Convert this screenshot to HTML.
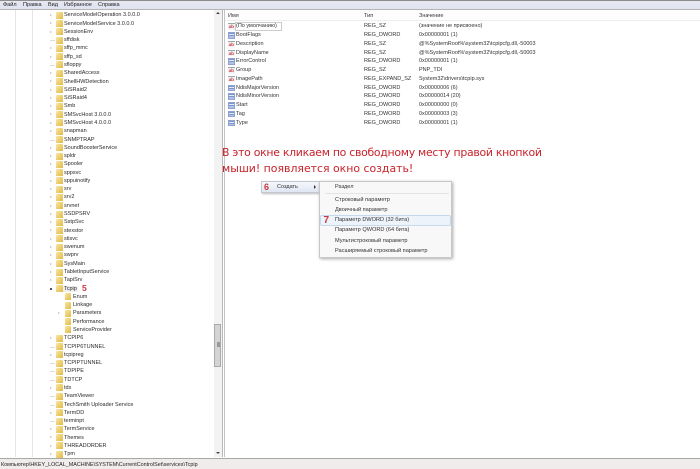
<!DOCTYPE html>
<html lang="ru"><head><meta charset="utf-8">
<style>
html,body{margin:0;padding:0;background:#fff}
#p{position:relative;width:700px;height:469px;overflow:hidden;background:#fff;font-family:"Liberation Sans","Noto Sans CJK SC",sans-serif;color:#222;font-size:5.5px;filter:blur(.3px)}
.a{position:absolute;white-space:nowrap}
.t{position:absolute;left:0;top:11.3px;width:214px}
.r{position:relative;height:8.287px;line-height:8.287px;padding-left:64px;white-space:nowrap;color:#2a2a2a}
.r i{position:absolute;left:56px;top:.5px;width:6.5px;height:7px;background:linear-gradient(135deg,#f8e7a0,#e2b84a);border-radius:1px 1px 0 0}
.r.c{padding-left:73px}.r.c i{left:64.5px}
.r b{position:absolute;left:50px;top:2.8px;width:0;height:0;border-left:2.5px solid #bbb;border-top:1.5px solid transparent;border-bottom:1.5px solid transparent}
.r u{position:absolute;left:50px;top:4px;width:5px;height:1px;background:#ddd}
.l{position:absolute;left:0;width:230px;height:8.75px;line-height:8.75px;color:#333;white-space:nowrap}
.l i{position:absolute;left:228px;top:1.2px;width:6.5px;height:6.5px;box-sizing:border-box;font:bold 4.6px/6px "Liberation Sans",sans-serif;text-align:center;font-style:normal}
.l i.s{background:#f3f3f6;color:#c8383c;border-top:1px solid #9aa}
.l i.d{background:repeating-linear-gradient(#7d95cc 0 1.1px,#e6ebf7 1.1px 2.2px);border:.5px solid #8ea3d2}
.l span{position:absolute;top:0}
.l .n{left:236px}.l .y{left:364px}.l .v{left:419px}
.m{left:335px;font-size:5.6px;color:#333}
</style></head><body>
<div id="p">
<div class="a" style="left:0;top:0;width:700px;height:1px;background:#8d8d8d"></div>
<div class="a" style="left:0;top:1px;width:700px;height:8px;background:linear-gradient(#e6e7f1,#e0e3f1)"></div>
<div class="a" style="left:0;top:9px;width:700px;height:1px;background:#b5b5b5"></div>
<div class="a" style="left:3px;top:1.5px;line-height:7px">Файл</div>
<div class="a" style="left:23px;top:1.5px;line-height:7px">Правка</div>
<div class="a" style="left:48px;top:1.5px;line-height:7px">Вид</div>
<div class="a" style="left:64px;top:1.5px;line-height:7px">Избранное</div>
<div class="a" style="left:98px;top:1.5px;line-height:7px">Справка</div>

<div class="a" style="left:15px;top:10px;width:1px;height:447px;background:#e6e6e6"></div>
<div class="a" style="left:32px;top:10px;width:1px;height:447px;background:#e6e6e6"></div>

<div class="t">
<div class="r"><b></b><i></i>ServiceModelOperation 3.0.0.0</div>
<div class="r"><b></b><i></i>ServiceModelService 3.0.0.0</div>
<div class="r"><b></b><i></i>SessionEnv</div>
<div class="r"><u></u><i></i>sffdisk</div>
<div class="r"><b></b><i></i>sffp_mmc</div>
<div class="r"><b></b><i></i>sffp_sd</div>
<div class="r"><u></u><i></i>sfloppy</div>
<div class="r"><b></b><i></i>SharedAccess</div>
<div class="r"><b></b><i></i>ShellHWDetection</div>
<div class="r"><b></b><i></i>SiSRaid2</div>
<div class="r"><b></b><i></i>SiSRaid4</div>
<div class="r"><b></b><i></i>Smb</div>
<div class="r"><b></b><i></i>SMSvcHost 3.0.0.0</div>
<div class="r"><b></b><i></i>SMSvcHost 4.0.0.0</div>
<div class="r"><b></b><i></i>snapman</div>
<div class="r"><u></u><i></i>SNMPTRAP</div>
<div class="r"><b></b><i></i>SoundBoosterService</div>
<div class="r"><b></b><i></i>spldr</div>
<div class="r"><b></b><i></i>Spooler</div>
<div class="r"><b></b><i></i>sppsvc</div>
<div class="r"><b></b><i></i>sppuinotify</div>
<div class="r"><b></b><i></i>srv</div>
<div class="r"><b></b><i></i>srv2</div>
<div class="r"><b></b><i></i>srvnet</div>
<div class="r"><b></b><i></i>SSDPSRV</div>
<div class="r"><b></b><i></i>SstpSvc</div>
<div class="r"><b></b><i></i>stexstor</div>
<div class="r"><b></b><i></i>stisvc</div>
<div class="r"><b></b><i></i>swenum</div>
<div class="r"><b></b><i></i>swprv</div>
<div class="r"><b></b><i></i>SysMain</div>
<div class="r"><b></b><i></i>TabletInputService</div>
<div class="r"><b></b><i></i>TapiSrv</div>
<div class="r"><b style="border:0;width:2px;height:2px;background:#555;top:3.5px"></b><i></i><span style="background:#efefef;padding:0 1px;margin-left:-1px">Tcpip</span><span style="position:absolute;left:82px;top:-1px;font-size:8.5px;font-weight:bold;color:#c8383c">5</span></div>
<div class="r c"><i></i>Enum</div>
<div class="r c"><i></i>Linkage</div>
<div class="r c"><b style="left:58px"></b><i></i>Parameters</div>
<div class="r c"><i></i>Performance</div>
<div class="r c"><i></i>ServiceProvider</div>
<div class="r"><b></b><i></i>TCPIP6</div>
<div class="r"><u></u><i></i>TCPIP6TUNNEL</div>
<div class="r"><b></b><i></i>tcpipreg</div>
<div class="r"><u></u><i></i>TCPIPTUNNEL</div>
<div class="r"><u></u><i></i>TDPIPE</div>
<div class="r"><u></u><i></i>TDTCP</div>
<div class="r"><b></b><i></i>tdx</div>
<div class="r"><u></u><i></i>TeamViewer</div>
<div class="r"><u></u><i></i>TechSmith Uploader Service</div>
<div class="r"><b></b><i></i>TermDD</div>
<div class="r"><u></u><i></i>terminpt</div>
<div class="r"><b></b><i></i>TermService</div>
<div class="r"><b></b><i></i>Themes</div>
<div class="r"><b></b><i></i>THREADORDER</div>
<div class="r"><b></b><i></i>Tpm</div>
</div>

<!-- tree scrollbar -->
<div class="a" style="left:214px;top:10px;width:8px;height:447px;background:#f2f2f2"></div>
<div class="a" style="left:214px;top:324px;width:7px;height:43px;background:#d4d4d6;border:1px solid #aaa;box-sizing:border-box"></div>
<div class="a" style="left:216.5px;top:342px;width:3px;height:5px;background:#999"></div>
<div class="a" style="left:216px;top:12px;width:0;height:0;border-left:2px solid transparent;border-right:2px solid transparent;border-bottom:2px solid #444"></div>
<div class="a" style="left:216px;top:452px;width:0;height:0;border-left:2px solid transparent;border-right:2px solid transparent;border-top:2px solid #444"></div>
<div class="a" style="left:222px;top:10px;width:1px;height:447px;background:#b8b8b8"></div>
<div class="a" style="left:224px;top:10px;width:1px;height:447px;background:#c4c4c4"></div>

<!-- list header -->
<div class="a" style="left:225px;top:10px;width:475px;height:11px;background:#fdfdfd;border-bottom:1px solid #eee;box-sizing:border-box"></div>
<div class="a" style="left:228px;top:12px;line-height:8px;color:#333">Имя</div>
<div class="a" style="left:364px;top:12px;line-height:8px;color:#333">Тип</div>
<div class="a" style="left:419px;top:12px;line-height:8px;color:#333">Значение</div>

<div class="a" style="left:235px;top:22px;width:47px;height:9px;border:1px solid #ccc;box-sizing:border-box"></div>
<div class="l" style="top:22.3px"><i class="s">ab</i><span class="n">(По умолчанию)</span><span class="y">REG_SZ</span><span class="v">(значение не присвоено)</span></div>
<div class="l" style="top:31.05px"><i class="d"></i><span class="n">BootFlags</span><span class="y">REG_DWORD</span><span class="v">0x00000001 (1)</span></div>
<div class="l" style="top:39.8px"><i class="s">ab</i><span class="n">Description</span><span class="y">REG_SZ</span><span class="v">@%SystemRoot%\system32\tcpipcfg.dll,-50003</span></div>
<div class="l" style="top:48.55px"><i class="s">ab</i><span class="n">DisplayName</span><span class="y">REG_SZ</span><span class="v">@%SystemRoot%\system32\tcpipcfg.dll,-50003</span></div>
<div class="l" style="top:57.3px"><i class="d"></i><span class="n">ErrorControl</span><span class="y">REG_DWORD</span><span class="v">0x00000001 (1)</span></div>
<div class="l" style="top:66.05px"><i class="s">ab</i><span class="n">Group</span><span class="y">REG_SZ</span><span class="v">PNP_TDI</span></div>
<div class="l" style="top:74.8px"><i class="s">ab</i><span class="n">ImagePath</span><span class="y">REG_EXPAND_SZ</span><span class="v">System32\drivers\tcpip.sys</span></div>
<div class="l" style="top:83.55px"><i class="d"></i><span class="n">NdisMajorVersion</span><span class="y">REG_DWORD</span><span class="v">0x00000006 (6)</span></div>
<div class="l" style="top:92.3px"><i class="d"></i><span class="n">NdisMinorVersion</span><span class="y">REG_DWORD</span><span class="v">0x00000014 (20)</span></div>
<div class="l" style="top:101.05px"><i class="d"></i><span class="n">Start</span><span class="y">REG_DWORD</span><span class="v">0x00000000 (0)</span></div>
<div class="l" style="top:109.8px"><i class="d"></i><span class="n">Tag</span><span class="y">REG_DWORD</span><span class="v">0x00000003 (3)</span></div>
<div class="l" style="top:118.55px"><i class="d"></i><span class="n">Type</span><span class="y">REG_DWORD</span><span class="v">0x00000001 (1)</span></div>

<!-- red text -->
<div class="a" style="left:222px;top:144.5px;line-height:16px;font-family:'DejaVu Sans',sans-serif;font-size:10.9px;letter-spacing:-.28px;color:#c8222a">В это окне кликаем по свободному месту правой кнопкой</div>
<div class="a" style="left:222px;top:160.5px;line-height:16px;font-family:'DejaVu Sans',sans-serif;font-size:10.9px;color:#c8222a">мыши! появляется окно создать!</div>

<!-- left menu -->
<div class="a" style="left:261px;top:181px;width:59px;height:12px;background:linear-gradient(#f6f7fb,#dfe6f3);border:1px solid #c4c8d0;box-sizing:border-box;box-shadow:1px 1px 2px #bbb"></div>
<div class="a" style="left:264px;top:181px;line-height:12px;font-size:9px;font-weight:bold;color:#c8383c">6</div>
<div class="a" style="left:277px;top:182.5px;line-height:8px;color:#333">Создать</div>
<div class="a" style="left:314px;top:185px;width:0;height:0;border-left:2.5px solid #333;border-top:2px solid transparent;border-bottom:2px solid transparent"></div>

<!-- right menu -->
<div class="a" style="left:319px;top:181px;width:133px;height:77px;background:#f8f8f8;border:1px solid #c8c8c8;box-sizing:border-box;box-shadow:1px 1px 3px #aaa"></div>
<div class="a" style="left:320px;top:215px;width:131px;height:10.5px;background:#edf3fa;border:1px solid #c6d9ec;box-sizing:border-box;border-radius:2px"></div>
<div class="a" style="left:323.5px;top:214px;line-height:14px;font-size:10px;font-weight:bold;color:#c8383c">7</div>
<div class="a" style="left:325px;top:193px;width:124px;height:1px;background:#e4e4e4"></div>
<div class="a m" style="top:182.5px;line-height:8px">Раздел</div>
<div class="a m" style="top:196.3px;line-height:8px">Строковый параметр</div>
<div class="a m" style="top:206.3px;line-height:8px">Двоичный параметр</div>
<div class="a m" style="top:216.3px;line-height:8px">Параметр DWORD (32 бита)</div>
<div class="a m" style="top:226.3px;line-height:8px">Параметр QWORD (64 бита)</div>
<div class="a m" style="top:236.7px;line-height:8px">Мультистроковый параметр</div>
<div class="a m" style="top:247px;line-height:8px">Расширяемый строковый параметр</div>

<!-- status -->
<div class="a" style="left:0;top:458px;width:700px;height:1px;background:#a8a8a8"></div>
<div class="a" style="left:0;top:459px;width:700px;height:10px;background:#f0ecec"></div>
<div class="a" style="left:1px;top:461px;line-height:8px;font-size:5.4px;color:#222">Компьютер\HKEY_LOCAL_MACHINE\SYSTEM\CurrentControlSet\services\Tcpip</div>
</div>
</body></html>
